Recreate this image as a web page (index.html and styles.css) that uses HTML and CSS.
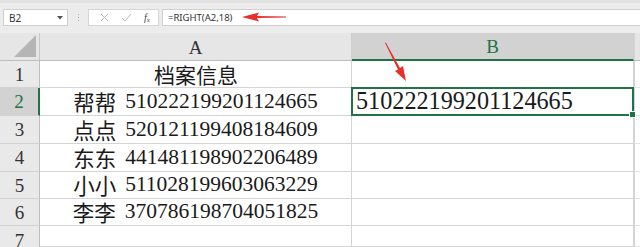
FILE: index.html
```html
<!DOCTYPE html>
<html>
<head>
<meta charset="utf-8">
<link rel="stylesheet" href="styles.css">
</head>
<body>
<div class="toolbar">
  <div class="namebox"><span>B2</span><svg class="dd" width="6" height="4" viewBox="0 0 6 4"><path d="M0 0H6L3 3.5Z" fill="#555"/></svg></div>
  <div class="sep"><i></i><i></i><i></i></div>
  <div class="fxbox">
    <svg width="9" height="9" viewBox="0 0 9 9"><path d="M1 1L8 8M8 1L1 8" stroke="#b9b9b9" stroke-width="1"/></svg>
    <svg width="11" height="9" viewBox="0 0 11 9"><path d="M1 5L4 8L10 1" stroke="#b9b9b9" stroke-width="1" fill="none"/></svg>
    <span class="fx">f<sub>x</sub></span>
  </div>
  <div class="formula">=RIGHT(A2,18)</div>
  <svg class="arrow1" width="50" height="12" viewBox="0 0 50 12"><path d="M2 6L19 1.5L17 5L46 5.6L46 6.4L17 7L19 10.5Z" fill="#e8302a"/></svg>
</div>
<div class="sheet">
  <div class="corner"><svg width="24" height="24" viewBox="0 0 24 24"><path d="M23 1V23H1Z" fill="#b5b5b5"/></svg></div>
  <div class="colh">A</div>
  <div class="colh selc">B</div>
  <div class="rest hdr"></div>

  <div class="rowh">1</div>
  <div class="cell a title">档案信息</div>
  <div class="cell b"></div>
  <div class="rest"></div>

  <div class="rowh selr">2</div>
  <div class="cell a"><span class="nm">帮帮</span><span class="num">510222199201124665</span></div>
  <div class="cell b sel"><span class="big">510222199201124665</span></div>
  <div class="rest"></div>

  <div class="rowh">3</div>
  <div class="cell a"><span class="nm">点点</span><span class="num">520121199408184609</span></div>
  <div class="cell b"></div>
  <div class="rest"></div>

  <div class="rowh">4</div>
  <div class="cell a"><span class="nm">东东</span><span class="num">441481198902206489</span></div>
  <div class="cell b"></div>
  <div class="rest"></div>

  <div class="rowh">5</div>
  <div class="cell a"><span class="nm">小小</span><span class="num">511028199603063229</span></div>
  <div class="cell b"></div>
  <div class="rest"></div>

  <div class="rowh">6</div>
  <div class="cell a"><span class="nm">李李</span><span class="num">370786198704051825</span></div>
  <div class="cell b"></div>
  <div class="rest"></div>

  <div class="rowh last">7</div>
  <div class="cell a"></div>
  <div class="cell b"></div>
  <div class="rest"></div>

  <svg class="arrow2" width="30" height="42" viewBox="0 0 30 42"><path d="M3 2L3.8 1.6L18 27L21 25L24 40L13 30L16 28.5Z" fill="#e8302a"/></svg>
</div>
</body>
</html>
```
FILE: styles.css
```css
html, body {
  margin: 0;
  padding: 0;
  background: #fff;
  width: 640px;
  height: 247px;
  overflow: hidden;
}
.toolbar {
  position: relative;
  height: 33px;
  background: #ececec;
  border-top: 3px solid #e2e2e2;
  box-sizing: border-box;
  display: flex;
  align-items: flex-start;
  padding-top: 6px;
  font-family: "Noto Sans", "Open Sans", sans-serif;
  font-size: 10px;
  color: #333;
}
.namebox {
  margin-left: 3px;
  width: 65px;
  height: 17px;
  box-sizing: border-box;
  background: #fff;
  border: 1px solid #d0d0d0;
  display: flex;
  align-items: center;
  justify-content: space-between;
  padding: 0 4px 0 5px;
}
.sep {
  width: 20px;
  height: 17px;
  display: flex;
  flex-direction: column;
  align-items: center;
  justify-content: center;
  gap: 2px;
}
.sep i {
  display: block;
  width: 1px;
  height: 1px;
  background: #a9a9a9;
}
.fxbox {
  width: 71px;
  height: 17px;
  box-sizing: border-box;
  background: #fff;
  border: 1px solid #d6d6d6;
  display: flex;
  align-items: center;
  justify-content: space-around;
  padding: 0 2px 0 5px;
}
.fx {
  font-family: "Liberation Serif", serif;
  font-style: italic;
  font-size: 10px;
  color: #444;
}
.fx sub {
  font-size: 7px;
  vertical-align: -1px;
}
.formula {
  margin-left: 3px;
  flex: 1;
  height: 17px;
  box-sizing: border-box;
  background: #fff;
  border: 1px solid #d0d0d0;
  border-right: none;
  padding-left: 5px;
  line-height: 15px;
  font-size: 9.5px;
}
.arrow1 {
  position: absolute;
  left: 240px;
  top: 8px;
}
.sheet {
  position: relative;
  display: grid;
  grid-template-columns: 40px 312px 282px 1fr;
  grid-template-rows: 28px 27px 28px 28px 28px 27px 27px 21px;
  background: #fff;
  font-family: "Liberation Serif", "Noto Sans CJK SC", serif;
}
.corner {
  background: #e6e6e6;
  border-right: 1px solid #c8c8c8;
  border-bottom: 1px solid #bdbdbd;
  box-sizing: border-box;
  display: flex;
  align-items: flex-end;
  justify-content: flex-end;
  padding: 0 2px 2px 0;
}
.colh {
  background: #e6e6e6;
  border-right: 1px solid #cfcfcf;
  border-bottom: 1px solid #bdbdbd;
  box-sizing: border-box;
  display: flex;
  align-items: center;
  justify-content: center;
  font-size: 19px;
  line-height: 1;
  color: #333;
  padding-top: 1px;
}
.colh.selc {
  background: #d2d2d2;
  border-bottom: 2px solid #217346;
  color: #217346;
}
.rest {
  border-left: 1px solid #d4d4d4;
  border-bottom: 1px solid #e4e4e4;
  background: #fff;
}
.rest.hdr {
  background: #e6e6e6;
  border-bottom: 1px solid #bdbdbd;
}
.rowh {
  background: #e9e9e9;
  border-right: 1px solid #bdbdbd;
  border-bottom: 1px solid #d2d2d2;
  box-sizing: border-box;
  display: flex;
  align-items: center;
  justify-content: center;
  font-size: 19px;
  line-height: 1;
  color: #333;
}
.rowh.last {
  align-items: flex-start;
  padding-top: 5px;
  border-bottom: none;
}
.rowh.selr {
  background: #d2d2d2;
  border-right: 2px solid #217346;
  color: #217346;
}
.cell {
  border-right: 1px solid #d4d4d4;
  border-bottom: 1px solid #d4d4d4;
  box-sizing: border-box;
  display: flex;
  align-items: center;
  font-size: 21.5px;
  line-height: 1;
  color: #1a1a1a;
  white-space: nowrap;
}
.cell.a {
  justify-content: center;
}
.cell.title {
  font-family: "Noto Sans CJK SC", sans-serif;
  font-size: 21px;
  padding-left: 1px;
}
.cell.a .nm {
  font-family: "Noto Sans CJK SC", sans-serif;
  font-size: 21.5px;
  line-height: 1;
  margin-right: 9px;
  font-weight: 400;
}
.cell.sel {
  position: relative;
  padding-left: 4px;
}
.cell.sel::after {
  content: "";
  position: absolute;
  left: -1px;
  top: -1px;
  right: -1px;
  bottom: -1px;
  border: 2px solid #217346;
}
.cell.sel::before {
  content: "";
  position: absolute;
  right: -3px;
  bottom: -3px;
  width: 5px;
  height: 5px;
  background: #217346;
  border: 1px solid #fff;
  z-index: 2;
}
.big {
  font-size: 24.2px;
}
.arrow2 {
  position: absolute;
  left: 382px;
  top: 8px;
}
```
